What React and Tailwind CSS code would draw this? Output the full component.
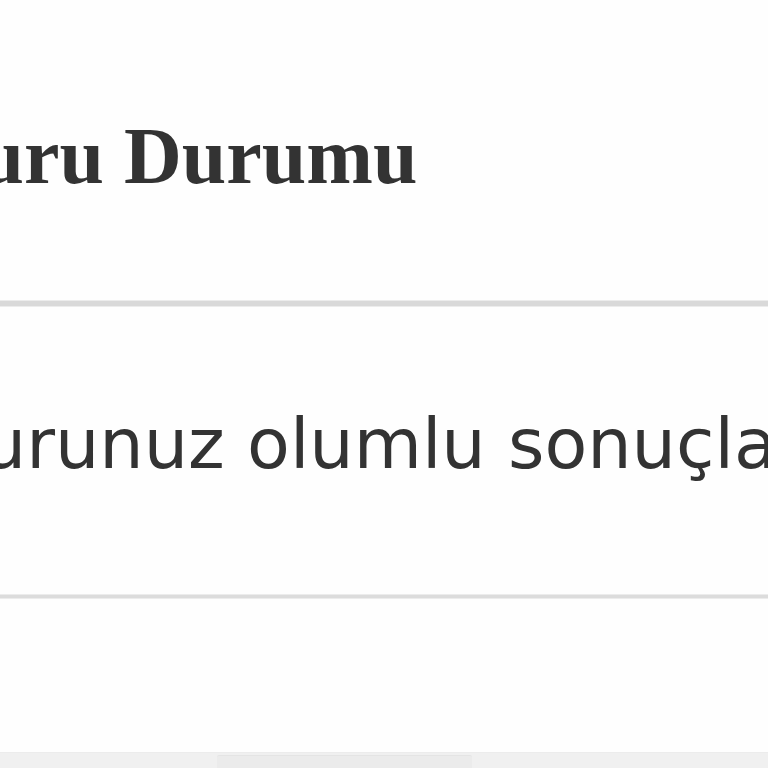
export default function App() {
  return (
    <div className="w-[768px] h-[768px] overflow-hidden bg-[#fefefe] flex flex-col text-[#333333]">
      <div className="h-[300px] flex flex-col overflow-hidden">
        <h1
          className="whitespace-nowrap ml-[-185px] mt-[116px] text-[80px] leading-none font-bold"
          style={{ fontFamily: '"Liberation Serif", serif' }}
        >
          Başvuru Durumu
        </h1>
      </div>
      <div className="h-[7px] bg-[#d9d9d9] border-y border-[#ececec]" />
      <div className="h-[287px] flex flex-col overflow-hidden">
        <p
          className="whitespace-nowrap ml-[-187px] mt-[102px] text-[70px] leading-none"
          style={{ fontFamily: '"DejaVu Sans", sans-serif' }}
        >
          Başvurunuz olumlu sonuçlandı.
        </p>
      </div>
      <div className="h-[5px] bg-[#dcdcdc] border-y border-[#ececec]" />
      <div className="flex-1" />
      <div className="h-[16px] bg-[#f0f0f0] border-t border-[#ececec] flex">
        <div className="ml-[217px] w-[255px] mt-[2px] bg-[#ebebeb] border-t border-[#e4e4e4] rounded-t-[2px]" />
      </div>
    </div>
  );
}
